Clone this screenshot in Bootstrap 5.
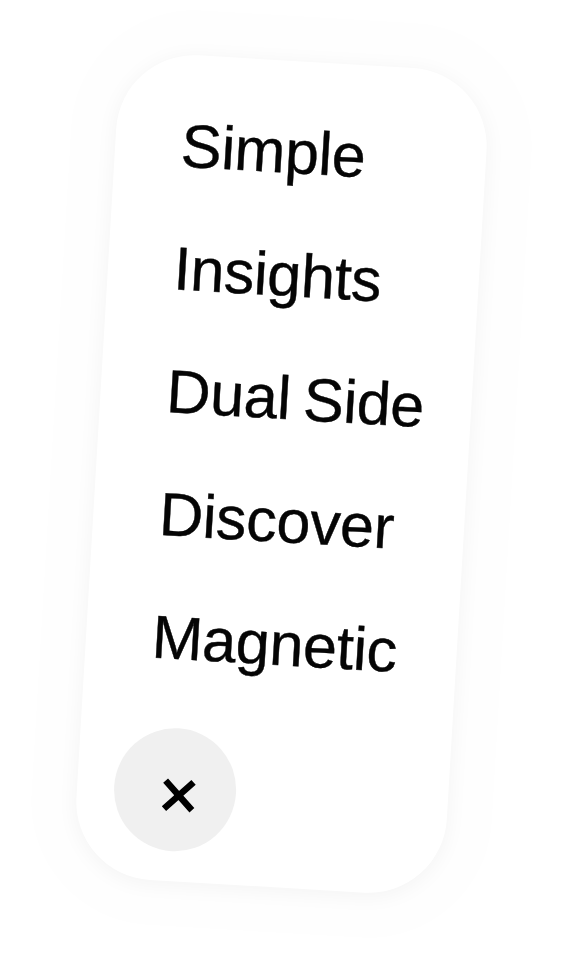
<!DOCTYPE html>
<html lang="en">
<head>
<meta charset="utf-8">
<link href="https://cdn.jsdelivr.net/npm/bootstrap@5.3.0/dist/css/bootstrap.min.css" rel="stylesheet">
<style>
html,body{margin:0;height:958px;overflow:hidden;background:#fff;}
.stage{height:958px;}
.halo{flex:none;width:371px;height:826px;margin-left:-3px;margin-top:-10px;border-radius:78px;background:#fff;box-shadow:0 3px 20px 2px rgba(0,0,0,.04),0 0 0 45px #fefefe;transform:rotate(3.4deg);padding:58px 0 30px 66px;}
.entry{font-family:"Liberation Sans",Arial,sans-serif;font-size:61px;line-height:66px;color:#050505;height:66px;margin-bottom:57px;white-space:nowrap;letter-spacing:-.3px;word-spacing:-4px;-webkit-text-stroke:.4px #050505;}
.entry-list{flex:1;}
.close-disc{width:122px;height:123px;background:#f0f0f0;margin-left:-29px;padding:11px 0 0 7px;}
</style>
</head>
<body>
<div class="stage d-flex justify-content-center align-items-center">
  <div class="halo d-flex flex-column">
    <div class="entry-list">
      <div class="entry">Simple</div>
      <div class="entry">Insights</div>
      <div class="entry">Dual Side</div>
      <div class="entry">Discover</div>
      <div class="entry">Magnetic</div>
    </div>
    <div class="close-disc rounded-circle d-flex align-items-center justify-content-center">
      <svg width="40" height="40" viewBox="0 0 40 40"><path d="M6 6L34 34M34 6L6 34" stroke="#000" stroke-width="6.5" fill="none"/></svg>
    </div>
  </div>
</div>
<script src="https://cdn.jsdelivr.net/npm/bootstrap@5.3.0/dist/js/bootstrap.bundle.min.js"></script>
</body>
</html>
